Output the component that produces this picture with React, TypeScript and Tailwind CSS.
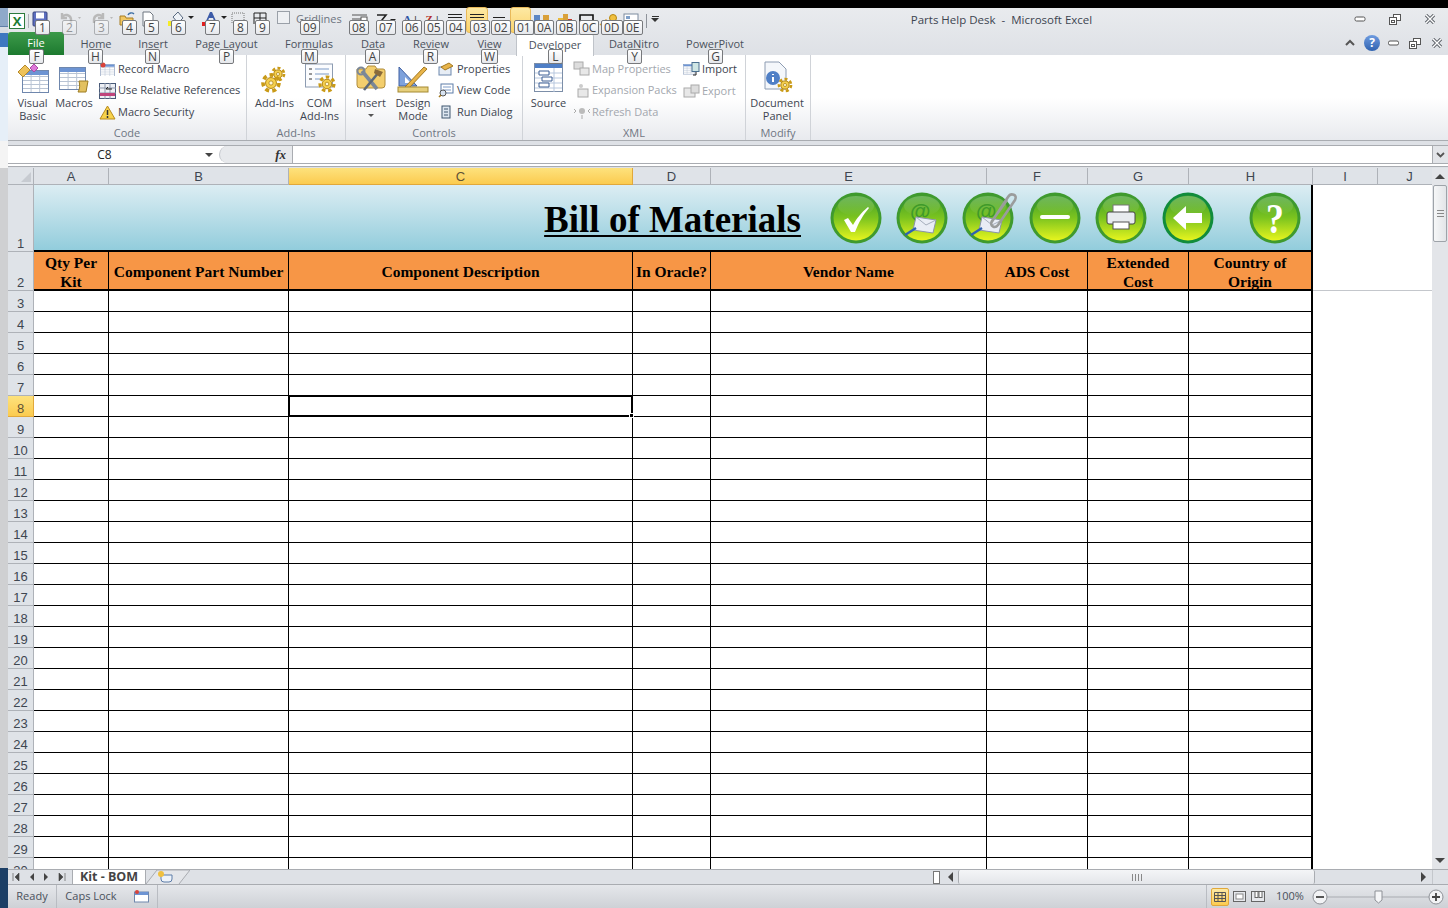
import type { ReactNode } from "react";

const UI_FONT = "font-['Open_Sans','Noto_Sans',sans-serif]";
const SHEET_FONT = "font-['Liberation_Serif',serif]";

// Small key tip label that sits over the ribbon
function KeyTip({ label, className = "" }: { label: string; className?: string }) {
  return (
    <span className={`absolute z-20 flex h-[15px] min-w-[15px] items-center justify-center rounded-[2px] border border-[#77797c] bg-gradient-to-b from-white to-[#e6e8ec] px-[2px] text-[12px] leading-none text-[#444] ${className}`}>
      {label}
    </span>
  );
}

function Gear({ x, y, r }: { x: number; y: number; r: number }) {
  return (
    <g>
      <circle cx={x} cy={y} r={r} fill="none" stroke="#c99a17" strokeWidth={r * 0.45} strokeDasharray={`${r * 0.5} ${r * 0.4}`} />
      <circle cx={x} cy={y} r={r * 0.68} fill="#f5d04e" stroke="#b58712" strokeWidth="1" />
      <circle cx={x} cy={y} r={r * 0.26} fill="#fff8d8" stroke="#a87c10" strokeWidth="0.7" />
    </g>
  );
}

function SheetIcon({ w = 26, h = 22 }: { w?: number; h?: number }) {
  const rows = [6, 10, 14, 18];
  return (
    <g>
      <rect x="0.5" y="0.5" width={w} height={h} fill="#fff" stroke="#6f87ad" />
      <rect x="1" y="1" width={w - 1} height="4" fill="#6d94d3" />
      {rows.map((y) => (
        <line key={y} x1="1" x2={w} y1={y + 0.5} y2={y + 0.5} stroke="#b9c4d4" />
      ))}
      <line x1={w * 0.35} x2={w * 0.35} y1="5" y2={h} stroke="#b9c4d4" />
      <line x1={w * 0.68} x2={w * 0.68} y1="5" y2={h} stroke="#b9c4d4" />
    </g>
  );
}

function CloseIcon() {
  return (
    <svg width="12" height="10" viewBox="0 0 12 10">
      <path d="M2 1l8 8M10 1L2 9" stroke="#5a5f66" strokeWidth="3.2" />
      <path d="M2 1l8 8M10 1L2 9" stroke="#fff" strokeWidth="1.4" />
    </svg>
  );
}

function RestoreIcon() {
  return (
    <svg width="12" height="12" viewBox="0 0 12 12">
      <rect x="4.5" y="1.5" width="7" height="6" fill="#fff" stroke="#555" />
      <rect x="0.5" y="4.5" width="7" height="7" fill="#fff" stroke="#555" />
      <rect x="2.5" y="7.5" width="3" height="2" fill="none" stroke="#555" />
    </svg>
  );
}

const qat: { tip: string; w: number; icon: ReactNode }[] = [
  {
    tip: "1", w: 27,
    icon: (
      <svg width="16" height="16" viewBox="0 0 16 16">
        <rect x="1" y="1" width="14" height="14" rx="1" fill="#5d6fc0" stroke="#39457f" />
        <rect x="4" y="1.5" width="8" height="6" fill="#fff" />
        <rect x="4" y="10" width="8" height="5" fill="#c9d0e8" />
      </svg>
    ),
  },
  {
    tip: "2", w: 32,
    icon: (
      <svg width="26" height="16" viewBox="0 0 26 16">
        <path d="M3 6a5 5 0 0 1 9 2v4M3 2v5h5" fill="none" stroke="#b9b9b9" strokeWidth="2.4" />
        <path d="M19 6l3 0-1.5 2z" fill="#b9b9b9" />
      </svg>
    ),
  },
  {
    tip: "3", w: 28,
    icon: (
      <svg width="26" height="16" viewBox="0 0 26 16">
        <path d="M12 6a5 5 0 0 0-9 2v4M12 2v5H7" fill="none" stroke="#b9b9b9" strokeWidth="2.4" />
        <path d="M19 6l3 0-1.5 2z" fill="#b9b9b9" />
      </svg>
    ),
  },
  {
    tip: "4", w: 22,
    icon: (
      <svg width="18" height="16" viewBox="0 0 18 16">
        <path d="M1 5h5l1 2h7v7H1z" fill="#f2c761" stroke="#a67c22" />
        <path d="M9 4c1-2 4-3 6-1" fill="none" stroke="#3d6ea5" strokeWidth="1.4" />
      </svg>
    ),
  },
  {
    tip: "5", w: 27,
    icon: (
      <svg width="14" height="16" viewBox="0 0 14 16">
        <path d="M2 1h7l3 3v11H2z" fill="#fff" stroke="#6f7680" />
      </svg>
    ),
  },
  {
    tip: "6", w: 34,
    icon: (
      <svg width="28" height="18" viewBox="0 0 28 18">
        <path d="M5 6l5-5 5 6-5 5z" fill="#eef2f7" stroke="#5a6a80" />
        <rect x="0" y="10" width="6" height="5" fill="#f5ec28" />
        <path d="M20 5h6l-3 3z" fill="#222" />
      </svg>
    ),
  },
  {
    tip: "7", w: 28,
    icon: (
      <svg width="28" height="18" viewBox="0 0 28 18">
        <path d="M4 10l4-9h2l4 9h-2l-1-3H7l-1 3z" fill="#3c5ba8" />
        <rect x="0" y="11" width="6" height="4" fill="#e02020" />
        <path d="M19 5h6l-3 3z" fill="#222" />
      </svg>
    ),
  },
  {
    tip: "8", w: 22,
    icon: (
      <svg width="16" height="14" viewBox="0 0 16 14">
        <rect x="2" y="2" width="12" height="10" fill="none" stroke="#777" strokeDasharray="1 1" />
      </svg>
    ),
  },
  {
    tip: "9", w: 22,
    icon: (
      <svg width="16" height="14" viewBox="0 0 16 14">
        <path d="M2 13V2h12v11M8 2v11M2 7h12" fill="none" stroke="#222" />
      </svg>
    ),
  },
];

const qat2: { tip: string; icon: ReactNode; w: number }[] = [
  { tip: "08", w: 27, icon: <svg width="18" height="12" viewBox="0 0 18 12"><path d="M1 2h15M1 6h11M1 10h15" stroke="#555" /><rect x="10" y="4" width="6" height="4" fill="#fff" stroke="#555" /></svg> },
  { tip: "07", w: 26, icon: <svg width="22" height="14" viewBox="0 0 22 14"><path d="M2 2h9L7 7l4 5H2" fill="none" stroke="#222" strokeWidth="1.6" /><path d="M15 6h6l-3 3z" fill="#222" /></svg> },
  { tip: "06", w: 22, icon: <span className="font-['Liberation_Serif',serif] text-[11px] font-bold leading-3 text-[#2f55a4]">A<span className="ml-[3px] text-[#333]">|</span></span> },
  { tip: "05", w: 22, icon: <span className="font-['Liberation_Serif',serif] text-[11px] font-bold leading-3 text-[#b3302b]">Z<span className="ml-[3px] text-[#333]">|</span></span> },
  { tip: "04", w: 23, icon: <svg width="16" height="10" viewBox="0 0 16 10"><path d="M1 1.5h14M1 4.5h14M1 7.5h14" stroke="#222" /></svg> },
  { tip: "03", w: 22, icon: <svg width="16" height="10" viewBox="0 0 16 10"><path d="M1 1.5h14M1 4.5h14M3 7.5h10" stroke="#222" /></svg> },
  { tip: "02", w: 22, icon: <svg width="16" height="10" viewBox="0 0 16 10"><path d="M2 4.5h12M1 8.5h14" stroke="#222" /></svg> },
  { tip: "01", w: 21, icon: null },
  { tip: "0A", w: 22, icon: <svg width="18" height="13" viewBox="0 0 18 13"><rect x="1" y="2" width="6" height="7" fill="#5d86c5" /><rect x="10" y="2" width="6" height="7" fill="#d9a03a" /></svg> },
  { tip: "0B", w: 23, icon: <svg width="18" height="13" viewBox="0 0 18 13"><rect x="2" y="5" width="5" height="7" fill="#e9b93a" /><rect x="7" y="1" width="5" height="11" fill="#d9a03a" /><rect x="12" y="6" width="4" height="6" fill="#c23b2e" /></svg> },
  { tip: "0C", w: 22, icon: <svg width="18" height="13" viewBox="0 0 18 13"><path d="M2 12V2h13v10" fill="none" stroke="#111" strokeWidth="1.6" /></svg> },
  { tip: "0D", w: 22, icon: <svg width="20" height="13" viewBox="0 0 20 13"><path d="M1 12l6-5 4 3" fill="none" stroke="#d9a03a" strokeWidth="1.5" /><circle cx="14" cy="5" r="3.5" fill="#f0c040" stroke="#b58712" /></svg> },
  { tip: "0E", w: 22, icon: <svg width="16" height="14" viewBox="0 0 16 14"><rect x="1" y="1" width="14" height="12" fill="#fff" stroke="#7d8b9f" /><rect x="3" y="3" width="4" height="3" fill="#7fa0c9" /><rect x="9" y="8" width="4" height="3" fill="#7fa0c9" /></svg> },
];

function RibbonGroup({ title, width, children }: { title: string; width: string; children: ReactNode }) {
  return (
    <div className={`flex h-full shrink-0 flex-col border-r border-[#d0d3d8] ${width}`}>
      <div className="flex min-h-0 flex-1">{children}</div>
      <div className="h-[17px] text-center text-[11px] leading-[20px] text-[#6f7683]">{title}</div>
    </div>
  );
}

function SmallItem({ label, icon, muted }: { label: string; icon: ReactNode; muted?: boolean }) {
  return (
    <div className={`flex h-[22px] items-center gap-[2px] whitespace-nowrap text-[11px] ${muted ? "text-[#a3a7ae]" : "text-[#3d4550]"}`}>
      <span className="flex h-[18px] w-[18px] shrink-0 items-center justify-center">{icon}</span>
      {label}
    </div>
  );
}

function LargeButton({ label, icon, width, arrow }: { label: ReactNode; icon: ReactNode; width: string; arrow?: boolean }) {
  return (
    <div className={`flex shrink-0 flex-col items-center text-center text-[11px] leading-[13px] text-[#3d4550] ${width}`}>
      <div className="flex h-[37px] shrink-0 items-end justify-center pb-[3px]">{icon}</div>
      <div>{label}</div>
      {arrow && <div className="mt-[5px] h-0 w-0 border-x-[3px] border-t-[3px] border-x-transparent border-t-[#555]" />}
    </div>
  );
}

function Ribbon() {
  return (
    <div className={`relative flex h-[86px] w-full border-b border-[#a9acb1] bg-gradient-to-b from-white via-white to-[#e8eaee] ${UI_FONT}`}>
      <RibbonGroup title="Code" width="w-[239px]">
        <div className="relative flex pt-[4px] pl-[6px]">
          <LargeButton
            width="w-[37px]"
            label={<>Visual<br />Basic</>}
            icon={
              <svg width="32" height="32" viewBox="0 0 32 32">
                <g transform="translate(5 9)"><SheetIcon /></g>
                <path d="M1 11l7-7 5 5-7 7z" fill="#eec25a" stroke="#b58a2a" />
                <path d="M13 7l4-4 4 4-4 4z" fill="#dd77d8" stroke="#a94aa5" />
              </svg>
            }
          />
          <LargeButton
            width="w-[46px]"
            label="Macros"
            icon={
              <svg width="32" height="26" viewBox="0 0 32 26">
                <g transform="translate(1 0)"><SheetIcon /></g>
                <path d="M21 14h9l-2 11h-8c2-3 2-7 1-11z" fill="#e3c160" stroke="#9d7c22" />
              </svg>
            }
          />
        </div>
        <div className="flex flex-col pt-[3px] pl-[1px]">
          <SmallItem label="Record Macro" icon={<svg width="16" height="14" viewBox="0 0 16 14"><g transform="translate(1 2) scale(0.55)"><SheetIcon /></g><circle cx="4" cy="3" r="2.5" fill="#d9433a" /></svg>} />
          <SmallItem label="Use Relative References" icon={<svg width="17" height="16" viewBox="0 0 17 16"><rect x="0.5" y="0.5" width="16" height="15" fill="#eef0f5" stroke="#495a78" /><path d="M0 5h17M0 10h17M6 0v16M11 0v16" stroke="#8c97ab" /><rect x="1" y="10" width="15" height="3" fill="#c0447c" /><path d="M7 6h6M7 6l2-2" stroke="#222" fill="none" /></svg>} />
          <SmallItem label="Macro Security" icon={<svg width="17" height="15" viewBox="0 0 17 15"><path d="M8.5 1L16 14H1z" fill="#f7d24c" stroke="#b98a1d" /><path d="M8.5 5v5M8.5 11v2" stroke="#333" strokeWidth="1.5" /></svg>} />
        </div>
      </RibbonGroup>
      <RibbonGroup title="Add-Ins" width="w-[99px]">
        <div className="flex pt-[4px] pl-[5px]">
          <LargeButton
            width="w-[45px]"
            label="Add-Ins"
            icon={<svg width="28" height="28" viewBox="0 0 28 28"><Gear x={17} y={9} r={6} /><Gear x={10} y={18} r={8} /></svg>}
          />
          <LargeButton
            width="w-[45px]"
            label={<>COM<br />Add-Ins</>}
            icon={
              <svg width="32" height="30" viewBox="0 0 32 30">
                <rect x="1.5" y="1" width="27" height="23" fill="#fbfcfe" stroke="#8d9cb2" />
                <path d="M5 6h3M5 11h3M5 16h3" stroke="#333" />
                <path d="M11 6h14M11 11h14M11 16h8" stroke="#7d9bc7" />
                <Gear x={23} y={21} r={7} />
              </svg>
            }
          />
        </div>
      </RibbonGroup>
      <RibbonGroup title="Controls" width="w-[177px]">
        <div className="flex pt-[4px] pl-[7px]">
          <LargeButton
            width="w-[36px]"
            label="Insert"
            arrow
            icon={
              <svg width="32" height="28" viewBox="0 0 32 28">
                <path d="M2 4h9l2-3h7l2 3h6a2 2 0 0 1 2 2v14a3 3 0 0 1-3 3H5a3 3 0 0 1-3-3z" fill="#f3ce6d" stroke="#b08c3b" />
                <path d="M7 6l15 18" stroke="#7b8797" strokeWidth="3.6" />
                <path d="M24 7L9 25" stroke="#5e6977" strokeWidth="2.6" />
                <path d="M20 4l8 3-3 5-6-4z" fill="#8a6a3a" />
                <circle cx="6" cy="6" r="3.5" fill="none" stroke="#7b8797" strokeWidth="2" />
              </svg>
            }
          />
          <LargeButton
            width="w-[48px]"
            label={<>Design<br />Mode</>}
            icon={
              <svg width="32" height="27" viewBox="0 0 32 27">
                <path d="M2 1v19h18z" fill="#7ea2dc" stroke="#3e5fa1" />
                <path d="M8 11v6h6z" fill="#fff" />
                <path d="M8 21L27 1l3 2L11 23z" fill="#e8b44a" stroke="#a2781f" />
                <rect x="1" y="21" width="30" height="5" fill="#e6cf7c" stroke="#a58a32" />
              </svg>
            }
          />
        </div>
        <div className="flex flex-col pt-[3px]">
          <SmallItem label="Properties" icon={<svg width="16" height="14" viewBox="0 0 16 14"><rect x="1" y="5" width="12" height="8" fill="#e7edf5" stroke="#6d87ad" /><path d="M3 5l8-4 4 3-8 4z" fill="#e8b44a" stroke="#a2781f" /></svg>} />
          <SmallItem label="View Code" icon={<svg width="16" height="15" viewBox="0 0 16 15"><rect x="3" y="1" width="12" height="9" fill="#fff" stroke="#5d7ca8" /><path d="M5 4h8M5 7h8" stroke="#7d9bc7" /><circle cx="5" cy="10" r="3" fill="#d8e4f2" stroke="#555" /><path d="M3 12l-2 2" stroke="#a2781f" strokeWidth="1.6" /></svg>} />
          <SmallItem label="Run Dialog" icon={<svg width="12" height="14" viewBox="0 0 12 14"><rect x="2" y="1" width="8" height="12" fill="#dde6f0" stroke="#3f566f" /><path d="M4 4h4M4 7h4M4 10h4" stroke="#3f566f" /></svg>} />
        </div>
      </RibbonGroup>
      <RibbonGroup title="XML" width="w-[223px]">
        <div className="flex pt-[4px] pl-[7px]">
          <LargeButton
            width="w-[37px]"
            label="Source"
            icon={
              <svg width="32" height="30" viewBox="0 0 32 30">
                <rect x="1.5" y="0.5" width="28" height="28" fill="#fff" stroke="#7c8ea8" />
                <rect x="2" y="1" width="27" height="4" fill="#4f7fc6" />
                <path d="M2 10h27M2 15h27M2 20h27M2 25h27M21 5v24" stroke="#b7c7de" />
                <path d="M6 8h10v4H6zM9 14h10v4H9zM6 20h10v4H6z" fill="#fff" stroke="#3d5f94" />
              </svg>
            }
          />
        </div>
        <div className="ml-[5px] flex w-[107px] flex-col pt-[3px]">
          <SmallItem muted label="Map Properties" icon={<svg width="17" height="15" viewBox="0 0 17 15"><rect x="1" y="1" width="9" height="7" fill="#ddd" stroke="#aaa" /><rect x="7" y="7" width="9" height="7" fill="#e8e8e8" stroke="#aaa" /></svg>} />
          <SmallItem muted label="Expansion Packs" icon={<svg width="17" height="15" viewBox="0 0 17 15"><rect x="5" y="6" width="10" height="8" fill="#e8e8e8" stroke="#aaa" /><circle cx="8" cy="3" r="2" fill="#ccc" /></svg>} />
          <SmallItem muted label="Refresh Data" icon={<svg width="17" height="15" viewBox="0 0 17 15"><circle cx="9" cy="6" r="3" fill="#bbb" /><path d="M3 6l-2-2M3 6l-2 2M15 6l2-2M15 6l2 2M9 10v4" stroke="#aaa" /></svg>} />
        </div>
        <div className="ml-[3px] flex flex-col pt-[3px]">
          <SmallItem label="Import" icon={<svg width="17" height="15" viewBox="0 0 17 15"><g transform="translate(0 2) scale(0.45)"><SheetIcon /></g><rect x="9" y="0.5" width="7" height="9" fill="#cfe6e4" stroke="#4a6f8f" /><path d="M13 10v3h-3" fill="none" stroke="#222" /></svg>} />
          <SmallItem muted label="Export" icon={<svg width="17" height="15" viewBox="0 0 17 15"><rect x="1" y="4" width="11" height="9" fill="#e8e8e8" stroke="#aaa" /><rect x="8" y="1" width="8" height="8" fill="#ddd" stroke="#aaa" /></svg>} />
        </div>
      </RibbonGroup>
      <RibbonGroup title="Modify" width="w-[65px]">
        <div className="flex pt-[4px] pl-[5px]">
          <LargeButton
            width="w-[52px]"
            label={<>Document<br />Panel</>}
            icon={
              <svg width="32" height="32" viewBox="0 0 32 32">
                <path d="M4 1h14l7 7v20H4z" fill="#f4f7fb" stroke="#8d9cb2" />
                <circle cx="12" cy="17" r="7" fill="#4f7fc6" />
                <path d="M12 13v1M12 16v5" stroke="#fff" strokeWidth="2" />
                <Gear x={24} y={24} r={6} />
              </svg>
            }
          />
        </div>
      </RibbonGroup>
    </div>
  );
}

function TitleArea() {
  const tabs = [
    { label: "Home", w: "w-[56px]" },
    { label: "Insert", w: "w-[58px]" },
    { label: "Page Layout", w: "w-[89px]" },
    { label: "Formulas", w: "w-[76px]" },
    { label: "Data", w: "w-[52px]" },
    { label: "Review", w: "w-[64px]" },
    { label: "View", w: "w-[53px]" },
  ];
  const tips = [
    { l: "F", x: "left-[21px]" },
    { l: "H", x: "left-[80px]" },
    { l: "N", x: "left-[137px]" },
    { l: "P", x: "left-[211px]" },
    { l: "M", x: "left-[293px]" },
    { l: "A", x: "left-[357px]" },
    { l: "R", x: "left-[415px]" },
    { l: "W", x: "left-[473px]" },
    { l: "L", x: "left-[540px]" },
    { l: "Y", x: "left-[619px]" },
    { l: "G", x: "left-[700px]" },
  ];
  return (
    <div className={`relative h-[47px] bg-gradient-to-b from-[#e9ebee] to-[#dee1e6] ${UI_FONT}`}>
      <div className="flex h-[26px] items-start">
        <div className="flex h-[26px] items-center pl-[1px]">
          <div className="flex h-[16px] w-[16px] items-center justify-center border border-[#2c7a3d] bg-white text-[13px] font-bold leading-none text-[#1e7b34]">X</div>
          <div className="mx-[3px] h-[14px] w-px bg-[#aeb2b8]" />
        </div>
        {qat.map((q) => (
          <div key={q.tip} className="relative flex h-[26px] shrink-0 items-start pt-[3px]" style={{ width: q.w }}>
            {q.icon}
            <KeyTip label={q.tip} className={`top-[12px] left-[3px] ${q.tip === "2" || q.tip === "3" ? "opacity-50" : ""}`} />
          </div>
        ))}
        <div className="relative flex h-[26px] w-[72px] shrink-0 items-start gap-[6px] pt-[3px] pl-[3px] text-[11px] whitespace-nowrap text-[#6d7480]">
          <span className="h-[13px] w-[13px] shrink-0 border border-[#9aa0a8] bg-[#eef0f3]" />
          Gridlines
          <KeyTip label="09" className="top-[12px] left-[26px]" />
        </div>
        {qat2.map((q) => (
          <div key={q.tip} className={`relative flex h-[26px] shrink-0 items-start justify-center pt-[5px] ${q.tip === "03" || q.tip === "01" ? "-mt-[1px] rounded-[3px] border border-[#e8b95a] bg-gradient-to-b from-[#fde9a3] to-[#fbd36a]" : ""}`} style={{ width: q.w }}>
            {q.icon}
            <KeyTip label={q.tip} className="top-[12px] left-[3px] text-[11px]" />
          </div>
        ))}
        <div className="mx-[4px] mt-[6px] h-[14px] w-px bg-[#8e939a]" />
        <div className="mt-[8px] flex flex-col items-center gap-[1px]">
          <div className="h-px w-[7px] bg-[#333]" />
          <div className="h-0 w-0 border-x-[4px] border-t-[4px] border-x-transparent border-t-[#333]" />
        </div>
        <div className="flex-1 pt-[3px] pr-[104px] text-center text-[11.5px] text-[#3d4550]">Parts Help Desk&nbsp; -&nbsp; Microsoft Excel</div>
      </div>
      <div className="absolute top-[5px] right-[12px] flex items-center gap-[23px]">
        <svg width="12" height="8" viewBox="0 0 12 8"><rect x="1" y="2" width="10" height="4" rx="1.5" fill="#fff" stroke="#555" /></svg>
        <RestoreIcon />
        <CloseIcon />
      </div>
      <div className="flex h-[21px] items-start pl-[60px] text-[11px] text-[#4a515c]">
        {tabs.map((t) => (
          <div key={t.label} className={`h-[21px] text-center leading-[20px] ${t.w}`}>{t.label}</div>
        ))}
        <div className="relative z-10 h-[22px] w-[78px] rounded-t-[2px] border border-b-0 border-[#bfc3c9] bg-white text-center leading-[20px]">Developer</div>
        <div className="h-[21px] w-[80px] text-center leading-[20px]">DataNitro</div>
        <div className="h-[21px] w-[82px] text-center leading-[20px]">PowerPivot</div>
      </div>
      <div className="absolute top-[24px] left-0 flex h-[23px] w-[56px] items-center justify-center rounded-t-[3px] bg-gradient-to-b from-[#3c9a4a] to-[#1c7a2f] text-[11px] text-white">File</div>
      {tips.map((t) => (
        <KeyTip key={t.l} label={t.l} className={`top-[41px] ${t.x}`} />
      ))}
      <div className="absolute top-[27px] right-[5px] flex items-center gap-[10px]">
        <svg width="12" height="8" viewBox="0 0 12 8" className="-mr-[2px]"><path d="M2 6l4-4 4 4" fill="none" stroke="#555" strokeWidth="2" /></svg>
        <span className="-mr-[2px] flex h-[16px] w-[16px] items-center justify-center rounded-full bg-gradient-to-b from-[#6f9ce0] to-[#2f62b0] text-[12px] font-bold leading-none text-white">?</span>
        <svg width="11" height="6" viewBox="0 0 11 6"><rect x="0.5" y="1" width="10" height="4" rx="1.5" fill="#fff" stroke="#555" /></svg>
        <RestoreIcon />
        <CloseIcon />
      </div>
    </div>
  );
}

function FormulaBar() {
  return (
    <div className={`h-[27px] bg-[#dee1e6] pt-[4px] ${UI_FONT}`}>
      <div className="flex h-[19px] w-full border-y border-[#a9acb1] bg-white">
        <div className="relative flex w-[211px] shrink-0 items-center justify-center pr-[18px] text-[12px] text-[#222]">
          C8
          <div className="absolute top-[7px] right-[6px] h-0 w-0 border-x-[4px] border-t-[4px] border-x-transparent border-t-[#444]" />
        </div>
        <div className="flex w-[73px] shrink-0 items-center justify-end rounded-l-full border-l border-[#c4c7cc] bg-[#e7e9ec] pr-[6px]">
          <span className="font-['Liberation_Serif',serif] text-[13px] font-bold italic leading-none text-[#333]">fx</span>
        </div>
        <div className="flex-1 border-l border-[#a9acb1]" />
        <div className="flex w-[16px] items-center justify-center border-l border-[#a9acb1] bg-[#e3e5e9]">
          <svg width="9" height="6" viewBox="0 0 9 6"><path d="M1 1l3.5 3.5L8 1" fill="none" stroke="#555" strokeWidth="1.8" /></svg>
        </div>
      </div>
      <div className="h-[3px] border-b border-[#a9acb1] bg-white" />
    </div>
  );
}

const COLS = ["A", "B", "C", "D", "E", "F", "G", "H"];

function ColHeader({ label, selected }: { label: string; selected?: boolean }) {
  return (
    <div className={`flex h-[17px] items-center justify-center border-r border-b text-[13px] leading-none ${selected ? "border-[#e1a83a] bg-gradient-to-b from-[#fde27c] to-[#fbcb4e] text-[#5f5236]" : "border-[#aeb2b8] bg-[#dfe3e8] text-[#3e4650]"}`}>
      {label}
    </div>
  );
}

function RowHeader({ n, h }: { n: number; h: string }) {
  const selected = n === 8;
  return (
    <div className={`flex items-end justify-center border-r border-b text-[13px] leading-[14px] ${h} ${selected ? "border-[#e1a83a] bg-gradient-to-b from-[#fde27c] to-[#fbcb4e] text-[#5f5236]" : "border-[#aeb2b8] bg-[#dfe3e8] text-[#3e4650]"}`}>
      {n}
    </div>
  );
}

function GreenDefs() {
  return (
    <svg width="0" height="0" className="absolute">
      <defs>
        <linearGradient id="btnFill" x1="0" y1="0" x2="0" y2="1">
          <stop offset="0" stopColor="#3f9e29" />
          <stop offset="0.5" stopColor="#7cc41f" />
          <stop offset="1" stopColor="#e7f51e" />
        </linearGradient>
        <linearGradient id="btnShine" x1="0" y1="0" x2="0" y2="1">
          <stop offset="0" stopColor="#fff" stopOpacity="0.25" />
          <stop offset="1" stopColor="#fff" stopOpacity="0" />
        </linearGradient>
      </defs>
    </svg>
  );
}

function MailGlyph() {
  return (
    <g>
      <text x="14" y="27" fontSize="21" fontWeight="700" fill="#3f9a2a" fontFamily="Liberation Sans, sans-serif">@</text>
      <path d="M20 26l20 3-3 13-20-3z" fill="#e9edf5" stroke="#8a94a8" />
      <path d="M20 26l10 8 10-5" fill="none" stroke="#a5adbc" />
      <path d="M9 44l11-7" stroke="#2f62b0" strokeWidth="2.4" />
    </g>
  );
}

function GreenButton({ children, ml, dark }: { children: ReactNode; ml: string; dark?: boolean }) {
  return (
    <svg width="52" height="54" viewBox="0 0 52 54" className={`shrink-0 overflow-visible ${ml}`}>
      <circle cx="26" cy="27" r="25.5" fill={dark ? "#118c3c" : "#3f9a2e"} />
      <circle cx="26" cy="27" r="22.5" fill="url(#btnFill)" />
      <ellipse cx="26" cy="15" rx="18" ry="10" fill="url(#btnShine)" />
      {children}
    </svg>
  );
}

function TitleRow() {
  return (
    <div className="col-span-8 flex h-[67px] items-center justify-end border-r-2 border-b-2 border-black bg-gradient-to-b from-[#dcedf3] to-[#92cddc] pr-[10px]">
      <span className={`${SHEET_FONT} mt-[3px] mr-[29px] text-[37px] font-bold leading-none text-black underline decoration-2 underline-offset-[3px]`}>Bill of Materials</span>
      <GreenButton ml="">
        <path d="M14 29l4-2 5 7c4-7 8-12 15-18l1 1c-6 7-10 14-14 24h-4z" fill="#fff" />
      </GreenButton>
      <GreenButton ml="ml-[14px]"><MailGlyph /></GreenButton>
      <GreenButton ml="ml-[14px]">
        <MailGlyph />
        <path d="M29 32L46 6c3-5 10-2 7 3L36 34c-3 4-9 1-6-4L45 9" fill="none" stroke="#9a9c9c" strokeWidth="2.6" />
      </GreenButton>
      <GreenButton ml="ml-[15px]">
        <rect x="11" y="24" width="30" height="4" rx="2" fill="#fff" />
      </GreenButton>
      <GreenButton ml="ml-[14px]">
        <rect x="18" y="14" width="16" height="8" fill="#fff" stroke="#777" />
        <rect x="12" y="21" width="28" height="12" rx="2" fill="#e8ebee" stroke="#444" />
        <rect x="18" y="31" width="16" height="7" fill="#fff" stroke="#555" />
      </GreenButton>
      <GreenButton ml="ml-[15px]" dark>
        <path d="M11 27l13-12v7h16v10H24v7z" fill="#fff" />
      </GreenButton>
      <GreenButton ml="ml-[35px]">
        <text transform="translate(26 42) scale(0.85 1)" textAnchor="middle" fontSize="42" fontWeight="700" fill="#fff" fontFamily="Liberation Serif, serif">?</text>
      </GreenButton>
    </div>
  );
}

function Sheet() {
  const rows = Array.from({ length: 28 }, (_, i) => i + 3);
  const heads = ["Qty Per Kit", "Component Part Number", "Component Description", "In Oracle?", "Vendor Name", "ADS Cost", "Extended Cost", "Country of Origin"];
  return (
    <div className="relative h-[701px] min-w-0 flex-1 overflow-hidden bg-white font-['Liberation_Sans',sans-serif]">
      <GreenDefs />
      <div className="grid grid-cols-[26px_75px_180px_344px_78px_276px_101px_101px_124px_65px_55px]">
        <div className="flex h-[17px] items-end justify-end border-r border-b border-[#aeb2b8] bg-[#dfe3e8] p-[2px]">
          <div className="h-0 w-0 border-b-[10px] border-l-[10px] border-b-[#c7cbd1] border-l-transparent" />
        </div>
        {COLS.map((c) => (
          <ColHeader key={c} label={c} selected={c === "C"} />
        ))}
        <ColHeader label="I" />
        <div className="flex h-[17px] items-center justify-center border-b border-[#aeb2b8] bg-[#dfe3e8] pl-[8px] text-[13px] leading-none text-[#3e4650]">J</div>

        <RowHeader n={1} h="h-[67px]" />
        <TitleRow />
        <div className="col-span-2 h-[67px]" />

        <RowHeader n={2} h="h-[39px]" />
        {heads.map((h, i) => (
          <div key={h} className={`${SHEET_FONT} flex h-[39px] items-center justify-center border-b-2 border-black bg-[#f79646] pt-[2px] text-center text-[15.5px] font-bold leading-[19px] text-black ${i === 7 ? "border-r-2" : "border-r"} ${i === 3 ? "whitespace-nowrap" : "px-[4px]"}`}>
            {h}
          </div>
        ))}
        <div className="col-span-2 h-[39px] border-b border-[#c4c7cc]" />

        {rows.map((n) => (
          <div key={n} className="contents">
            <RowHeader n={n} h="h-[21px]" />
            {COLS.map((c) => (
              <div key={c} className={`relative h-[21px] border-b border-black ${c === "H" ? "border-r-2" : "border-r"} border-r-black`}>
                {c === "C" && n === 8 && (
                  <div className="absolute -top-px -left-px z-10 h-[22px] w-[345px] border-2 border-black">
                    <div className="absolute -right-[3px] -bottom-[3px] h-[5px] w-[5px] border border-white bg-black" />
                  </div>
                )}
              </div>
            ))}
            <div className="col-span-2 h-[21px]" />
          </div>
        ))}
      </div>
    </div>
  );
}

function VScroll() {
  return (
    <div className="flex h-[701px] w-[16px] shrink-0 flex-col items-center bg-[#e3e5e9]">
      <div className="flex h-[17px] w-full items-center justify-center">
        <div className="h-0 w-0 border-x-[5px] border-b-[5px] border-x-transparent border-b-[#444]" />
      </div>
      <div className="flex h-[57px] w-[14px] flex-col items-center justify-center gap-[2px] rounded-[2px] border border-[#9ea3a9] bg-gradient-to-r from-[#f6f7f8] to-[#e3e5e8]">
        <div className="h-px w-[7px] bg-[#888]" />
        <div className="h-px w-[7px] bg-[#888]" />
        <div className="h-px w-[7px] bg-[#888]" />
      </div>
      <div className="flex-1" />
      <div className="flex h-[17px] w-full items-center justify-center">
        <div className="h-0 w-0 border-x-[5px] border-t-[5px] border-x-transparent border-t-[#444]" />
      </div>
    </div>
  );
}

function SheetTabs() {
  return (
    <div className={`flex h-[16px] items-stretch border-t border-b border-[#a9acb1] bg-[#dee1e6] ${UI_FONT}`}>
      <div className="flex w-[64px] shrink-0 items-center justify-around pr-[2px] text-[#444]">
        <svg width="8" height="8" viewBox="0 0 8 8"><path d="M1 0v8M7 0L3 4l4 4z" fill="#444" stroke="#444" strokeWidth="0.6" /></svg>
        <svg width="6" height="8" viewBox="0 0 6 8"><path d="M5 0L1 4l4 4z" fill="#444" /></svg>
        <svg width="6" height="8" viewBox="0 0 6 8"><path d="M1 0l4 4-4 4z" fill="#444" /></svg>
        <svg width="8" height="8" viewBox="0 0 8 8"><path d="M7 0v8M1 0l4 4-4 4z" fill="#444" stroke="#444" strokeWidth="0.6" /></svg>
      </div>
      <div className="flex w-[74px] shrink-0 items-center justify-center border-x border-[#a9acb1] bg-white text-[12.5px] font-bold leading-none text-[#444]">Kit - BOM</div>
      <div className="flex w-[44px] shrink-0 items-center justify-center">
        <svg width="44" height="14" viewBox="0 0 44 14">
          <path d="M0 14L11 0h33L33 14" fill="#e4e6ea" stroke="#a9acb1" />
          <path d="M15 5h11v4a3 3 0 0 1-3 3h-5a3 3 0 0 1-3-3z" fill="#eef3fa" stroke="#5d7ca8" />
          <circle cx="15" cy="4" r="3" fill="#f0c040" />
        </svg>
      </div>
      <div className="flex-1" />
      <div className="flex w-[12px] items-center justify-center"><div className="h-[13px] w-[7px] border border-[#777] bg-white" /></div>
      <div className="flex w-[16px] items-center justify-center">
        <div className="h-0 w-0 border-y-[5px] border-r-[5px] border-y-transparent border-r-[#444]" />
      </div>
      <div className="flex w-[357px] items-center justify-center rounded-[2px] border-x border-[#a9acb1] bg-gradient-to-b from-[#f4f5f7] to-[#e4e6ea]">
        <div className="flex gap-[2px]">
          <div className="h-[7px] w-px bg-[#888]" />
          <div className="h-[7px] w-px bg-[#888]" />
          <div className="h-[7px] w-px bg-[#888]" />
          <div className="h-[7px] w-px bg-[#888]" />
        </div>
      </div>
      <div className="w-[100px]" />
      <div className="flex w-[17px] items-center justify-center">
        <div className="h-0 w-0 border-y-[5px] border-l-[5px] border-y-transparent border-l-[#444]" />
      </div>
      <div className="w-[16px] border-l border-[#c4c7cc]" />
    </div>
  );
}

function StatusBar() {
  return (
    <div className={`flex h-[23px] items-center bg-gradient-to-b from-[#e5e7eb] to-[#ced1d6] text-[11px] text-[#4a515c] ${UI_FONT}`}>
      <div className="flex h-full w-[49px] items-center justify-center border-r border-[#b9bcc2]">Ready</div>
      <div className="flex h-full w-[68px] items-center justify-center">Caps Lock</div>
      <div className="flex h-full w-[33px] items-center justify-center border-r border-[#b9bcc2]">
        <svg width="15" height="13" viewBox="0 0 15 13"><rect x="0.5" y="2" width="14" height="10" fill="#fff" stroke="#6f87ad" /><rect x="1" y="2" width="13" height="3" fill="#6d94d3" /><circle cx="3" cy="2" r="2" fill="#d9433a" /></svg>
      </div>
      <div className="flex-1" />
      <div className="flex h-full items-center gap-[4px] border-l border-[#b9bcc2] pl-[4px]">
        <div className="flex h-[18px] w-[18px] items-center justify-center rounded-[2px] border border-[#e1a83a] bg-gradient-to-b from-[#fde9a3] to-[#fbcb4e]">
          <svg width="12" height="10" viewBox="0 0 12 10"><path d="M0.5 0.5h11v9h-11zM0.5 3.5h11M0.5 6.5h11M4 0.5v9M8 0.5v9" fill="none" stroke="#555" /></svg>
        </div>
        <svg width="13" height="11" viewBox="0 0 13 11"><rect x="0.5" y="0.5" width="12" height="10" fill="#e6e8ec" stroke="#666" /><rect x="3" y="3" width="7" height="5" fill="#fff" stroke="#888" /></svg>
        <svg width="14" height="11" viewBox="0 0 14 11" className="ml-[1px]"><rect x="0.5" y="0.5" width="13" height="10" fill="#e6e8ec" stroke="#666" /><rect x="4" y="0.5" width="3" height="6" fill="#fff" stroke="#666" /><rect x="8" y="0.5" width="3" height="6" fill="#fff" stroke="#666" /></svg>
      </div>
      <div className="ml-[11px] w-[36px] text-[11px]">100%</div>
      <div className="flex items-center pr-[4px]">
        <svg width="132" height="18" viewBox="0 0 132 18">
          <line x1="15" x2="117" y1="9" y2="9" stroke="#a9acb1" />
          <circle cx="8" cy="9" r="7" fill="#f2f3f5" stroke="#8d9096" />
          <path d="M4 9h8" stroke="#444" strokeWidth="1.8" />
          <path d="M63 3h7v9l-3.5 3-3.5-3z" fill="#f5f6f8" stroke="#8d9096" />
          <circle cx="124" cy="9" r="7" fill="#f2f3f5" stroke="#8d9096" />
          <path d="M120 9h8M124 5v8" stroke="#444" strokeWidth="1.8" />
        </svg>
      </div>
    </div>
  );
}

export default function App() {
  return (
    <div className="flex h-[908px] w-[1448px] flex-col overflow-hidden bg-black">
      <div className="h-[8px] shrink-0 bg-black" />
      <div className="flex min-h-0 flex-1">
        <div className="flex w-[8px] shrink-0 flex-col">
          <div className="h-[19px] border-b border-[#5f7fa8] bg-[#8fa9c9]" />
          <div className="h-[6px] bg-[#d8dde3]" />
          <div className="h-[14px] bg-[#3f78c0]" />
          <div className="h-[94px] bg-[#e6eff8]" />
          <div className="h-[27px] bg-[#f4f4f4]" />
          <div className="flex-1 bg-[#cfd0d2]" />
          <div className="h-[40px] bg-[#1c3f66]" />
        </div>
        <div className="flex min-w-0 flex-1 flex-col">
          <TitleArea />
          <Ribbon />
          <FormulaBar />
          <div className="flex">
            <Sheet />
            <VScroll />
          </div>
          <SheetTabs />
          <StatusBar />
        </div>
      </div>
    </div>
  );
}
